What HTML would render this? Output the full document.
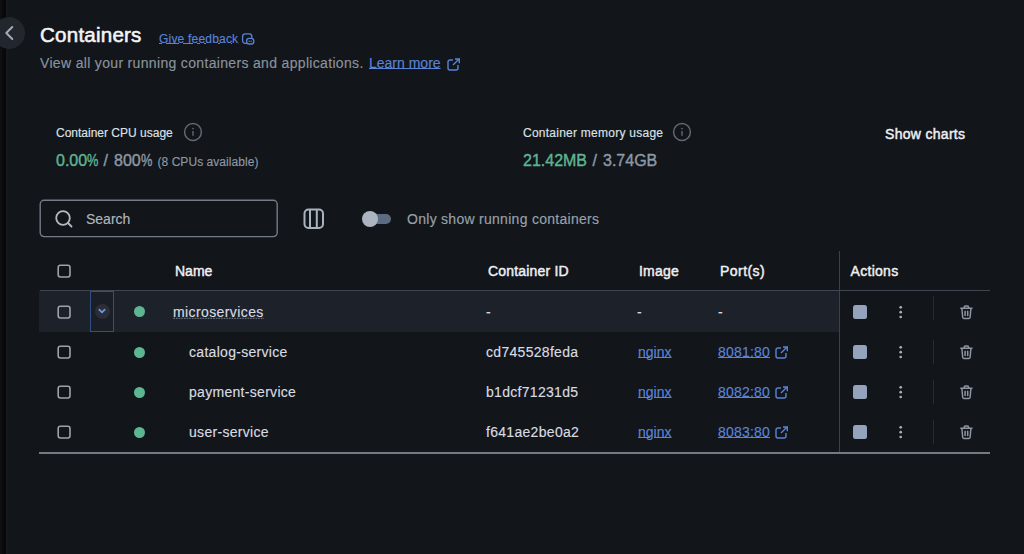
<!DOCTYPE html>
<html><head><meta charset="utf-8">
<style>
html,body{margin:0;padding:0;}
body{width:1024px;height:554px;overflow:hidden;background:#12151a;position:relative;font-family:"Liberation Sans",sans-serif;}
.a{position:absolute;}
.t{position:absolute;white-space:nowrap;-webkit-text-stroke:0.15px currentColor;}
.f12{font-size:12px;line-height:12px;}
.f14{font-size:14px;line-height:14px;}
.f16{font-size:16px;line-height:16px;}
.b{font-weight:400;-webkit-text-stroke:0.45px currentColor;}
.v{-webkit-text-stroke:0.4px currentColor;}
.lnk{color:#5a83d6;text-decoration:underline;text-underline-offset:0px;text-decoration-thickness:1px;}
.cb{position:absolute;width:14px;height:14px;}
.dot{position:absolute;width:11px;height:11px;border-radius:50%;background:#5db592;}
.stop{position:absolute;width:14px;height:14px;border-radius:2.5px;background:#92a3bb;}
.sep{position:absolute;width:1px;height:24px;background:#272b32;}
.cell{color:#d8dce1;}
</style></head>
<body>
<!-- left strip -->
<div class="a" style="left:0;top:0;width:6px;height:554px;background:linear-gradient(90deg,#0e1013 0,#0c0d10 2px,#07080a 3.5px,#07080a 5.5px,#0b0c0f 6px);"></div>
<div class="a" style="left:6px;top:0;width:1.5px;height:554px;background:#16181c;"></div>
<!-- back button -->
<div class="a" style="left:-7px;top:17px;width:32px;height:32px;border-radius:50%;background:#22262d;"></div>
<svg class="a" style="left:0;top:20px" width="24" height="26" viewBox="0 0 24 26"><path d="M12.3 7 L6.3 13 L12.3 19" fill="none" stroke="#a3abb5" stroke-width="2" stroke-linecap="round" stroke-linejoin="round"/></svg>

<!-- header -->
<div class="t b" style="left:40px;top:24.6px;font-size:20.6px;line-height:20.6px;color:#f3f5f7;letter-spacing:0.2px;-webkit-text-stroke:0.55px currentColor;">Containers</div>
<div class="t f12 lnk" style="left:159px;top:32.5px;letter-spacing:0.2px;">Give feedback</div>
<svg class="a" style="left:240px;top:31px" width="16" height="16" viewBox="0 0 16 16"><rect x="2.6" y="2.8" width="9.2" height="9.6" rx="2.6" fill="none" stroke="#5a83d6" stroke-width="1.3"/><rect x="6.6" y="7.4" width="7.2" height="5.6" rx="2.6" fill="#12151a" stroke="#5a83d6" stroke-width="1.3"/><circle cx="9.2" cy="10.2" r="0.7" fill="#5a83d6"/><circle cx="11.2" cy="10.2" r="0.7" fill="#5a83d6"/></svg>
<div class="t f14" style="left:40px;top:56px;color:#8a939d;letter-spacing:0.33px;">View all your running containers and applications.</div>
<div class="t f14 lnk" style="left:369px;top:56px;">Learn more</div>
<svg class="a" style="left:447px;top:58px" width="14" height="13" viewBox="0 0 14 13"><path d="M6 2 H3 A2 2 0 0 0 1 4 V10 A2 2 0 0 0 3 12 H9 A2 2 0 0 0 11 10 V7" fill="none" stroke="#5a83d6" stroke-width="1.4"/><path d="M6 7 L12 1 M8 1 H12.3 V5.3" fill="none" stroke="#5a83d6" stroke-width="1.4"/></svg>

<!-- stats -->
<div class="t f12" style="left:56px;top:126.5px;color:#dde1e6;">Container CPU usage</div>
<svg class="a" style="left:183px;top:122px" width="20" height="20" viewBox="0 0 20 20"><circle cx="10" cy="10" r="8.4" fill="none" stroke="#626871" stroke-width="1.5"/><circle cx="10" cy="6.6" r="0.9" fill="#5d636b"/><path d="M10 9 V13.8" stroke="#5d636b" stroke-width="1.5"/></svg>
<div class="t f16 v" style="left:56px;top:153px;color:#5fb393;">0.00<span style="display:inline-block;transform:scaleX(0.8);transform-origin:0 0;margin-right:-2.8px;">%</span></div>
<div class="t f16 v" style="left:103.5px;top:153px;color:#8d98a5;">/</div>
<div class="t f16 v" style="left:114px;top:153px;color:#8d98a5;">800<span style="display:inline-block;transform:scaleX(0.8);transform-origin:0 0;margin-right:-2.8px;">%</span></div>
<div class="t f12" style="left:157.5px;top:155.7px;color:#8d98a5;letter-spacing:0.05px;">(8 CPUs available)</div>

<div class="t f12" style="left:523px;top:126.5px;color:#dde1e6;letter-spacing:0.25px;">Container memory usage</div>
<svg class="a" style="left:672px;top:122px" width="20" height="20" viewBox="0 0 20 20"><circle cx="10" cy="10" r="8.4" fill="none" stroke="#626871" stroke-width="1.5"/><circle cx="10" cy="6.6" r="0.9" fill="#5d636b"/><path d="M10 9 V13.8" stroke="#5d636b" stroke-width="1.5"/></svg>
<div class="t f16 v" style="left:523px;top:153px;color:#5fb393;">21.42MB</div>
<div class="t f16 v" style="left:592.5px;top:153px;color:#8d98a5;">/</div>
<div class="t f16 v" style="left:603px;top:153px;color:#8d98a5;">3.74GB</div>

<div class="t f14 b" style="left:885px;top:127.3px;color:#eef0f3;letter-spacing:0.3px;">Show charts</div>

<!-- toolbar -->
<svg class="a" style="left:39px;top:199.2px" width="240" height="40" viewBox="0 0 240 40"><rect x="1.2" y="1.2" width="237" height="36.4" rx="4" fill="none" stroke="#737c87" stroke-width="1.4"/></svg>
<svg class="a" style="left:52px;top:207px" width="24" height="24" viewBox="0 0 24 24"><circle cx="11" cy="11" r="6.8" fill="none" stroke="#b3bac2" stroke-width="1.8"/><path d="M16 16 L19.5 19.5" stroke="#b3bac2" stroke-width="1.8" stroke-linecap="round"/></svg>
<div class="t f14" style="left:86px;top:212px;color:#b0b7bf;">Search</div>

<svg class="a" style="left:302px;top:207px" width="24" height="24" viewBox="0 0 24 24"><rect x="2.5" y="2.5" width="18.5" height="18.5" rx="4" fill="none" stroke="#a9b3c0" stroke-width="2"/><path d="M8 3 V21 M14.8 3 V21" stroke="#a9b3c0" stroke-width="2"/></svg>

<div class="a" style="left:363px;top:214px;width:28px;height:10px;border-radius:5px;background:#5b6b80;"></div>
<div class="a" style="left:361.8px;top:210.8px;width:16.5px;height:16.5px;border-radius:50%;background:#acb5bf;"></div>
<div class="t f14" style="left:407px;top:212px;color:#98a1ab;letter-spacing:0.28px;">Only show running containers</div>

<!-- table header -->
<svg class="cb" style="left:57.3px;top:263.6px" width="14" height="14" viewBox="0 0 14 14"><rect x="1.2" y="1.2" width="11.8" height="11.8" rx="2.2" fill="none" stroke="#9ca3ab" stroke-width="1.6"/></svg>
<div class="t f14 b" style="left:175px;top:264px;color:#eef0f3;">Name</div>
<div class="t f14 b" style="left:488px;top:264px;color:#eef0f3;letter-spacing:0.18px;">Container ID</div>
<div class="t f14 b" style="left:639px;top:264px;color:#eef0f3;letter-spacing:0.2px;">Image</div>
<div class="t f14 b" style="left:720px;top:264px;color:#eef0f3;letter-spacing:0.45px;">Port(s)</div>
<div class="t f14 b" style="left:850.5px;top:264px;color:#eef0f3;letter-spacing:0.3px;">Actions</div>

<!-- row 1 bg -->
<div class="a" style="left:39px;top:291px;width:800px;height:40.5px;background:#1c212a;"></div>
<div class="a" style="left:40px;top:290.3px;width:950px;height:1.2px;background:#40464f;"></div>
<div class="a" style="left:839px;top:251px;width:1px;height:202px;background:#3c424a;"></div>
<div class="a" style="left:39px;top:452px;width:951px;height:1.6px;background:#737a83;"></div>

<svg class="cb" style="left:57.3px;top:304.5px" width="14" height="14" viewBox="0 0 14 14"><rect x="1.2" y="1.2" width="11.8" height="11.8" rx="2.2" fill="none" stroke="#9ca3ab" stroke-width="1.6"/></svg>
<div class="a" style="left:89.8px;top:291px;width:22.3px;height:38.8px;border:1px solid #344e86;background:#1a1e26;"></div>
<div class="a" style="left:95.3px;top:304.2px;width:15px;height:15px;border-radius:50%;background:#2b2e36;"></div>
<svg class="a" style="left:96.3px;top:305.2px" width="12" height="12" viewBox="0 0 12 12"><path d="M3.3 4.6 L6 7.3 L8.7 4.6" fill="none" stroke="#6a96e6" stroke-width="1.8" stroke-linecap="round" stroke-linejoin="round"/></svg>
<div class="dot" style="left:133.7px;top:306.0px;"></div>
<div class="t f14 cell" style="left:173px;top:304.55px;letter-spacing:0.4px;">microservices</div>
<svg class="a" style="left:173px;top:317px" width="92" height="3" viewBox="0 0 92 3"><path d="M0.3 1.4 H91" stroke="#656c75" stroke-width="1.3" stroke-dasharray="1.7 0.95"/></svg>
<div class="t f14 cell" style="left:486px;top:304.55px;letter-spacing:0.3px;">-</div>
<div class="t f14 cell" style="left:637px;top:304.55px;">-</div>
<div class="t f14 cell" style="left:718px;top:304.55px;">-</div>
<div class="stop" style="left:853.3px;top:304.5px;"></div>
<svg class="a" style="left:896px;top:303.50px" width="10" height="16" viewBox="0 0 10 16"><circle cx="4.7" cy="3.3" r="1.35" fill="#a9b0b8"/><circle cx="4.7" cy="8.15" r="1.35" fill="#a9b0b8"/><circle cx="4.7" cy="13" r="1.35" fill="#a9b0b8"/></svg>
<div class="sep" style="left:933px;top:296px;"></div>
<svg class="a" style="left:958px;top:303.5px" width="18" height="17" viewBox="0 0 18 17"><path d="M2.8 4.3 H14 M6.2 4.2 V3.2 A1.2 1.2 0 0 1 7.4 2 H9.4 A1.2 1.2 0 0 1 10.6 3.2 V4.2 M3.9 4.5 L4.7 13.3 A1.5 1.5 0 0 0 6.2 14.5 H10.6 A1.5 1.5 0 0 0 12.1 13.3 L12.9 4.5 M7.1 7.2 V11.6 M9.7 7.2 V11.6" fill="none" stroke="#8e96a0" stroke-width="1.5" stroke-linecap="round" stroke-linejoin="round"/></svg>
<svg class="cb" style="left:57.3px;top:345.0px" width="14" height="14" viewBox="0 0 14 14"><rect x="1.2" y="1.2" width="11.8" height="11.8" rx="2.2" fill="none" stroke="#9ca3ab" stroke-width="1.6"/></svg>
<div class="dot" style="left:133.7px;top:346.5px;"></div>
<div class="t f14 cell" style="left:189px;top:345.05px;letter-spacing:0.3px;">catalog-service</div>
<div class="t f14 cell" style="left:486px;top:345.05px;letter-spacing:0.3px;">cd745528feda</div>
<div class="t f14 lnk" style="left:638px;top:345.05px;">nginx</div>
<div class="t f14 lnk" style="left:718px;top:345.05px;letter-spacing:0.2px;">8081:80</div>
<svg class="a" style="left:775px;top:345.5px" width="14" height="13" viewBox="0 0 14 13"><path d="M6 2 H3 A2 2 0 0 0 1 4 V10 A2 2 0 0 0 3 12 H9 A2 2 0 0 0 11 10 V7" fill="none" stroke="#5a83d6" stroke-width="1.4"/><path d="M6 7 L12 1 M8 1 H12.3 V5.3" fill="none" stroke="#5a83d6" stroke-width="1.4"/></svg>
<div class="stop" style="left:853.3px;top:345.0px;"></div>
<svg class="a" style="left:896px;top:344.00px" width="10" height="16" viewBox="0 0 10 16"><circle cx="4.7" cy="3.3" r="1.35" fill="#a9b0b8"/><circle cx="4.7" cy="8.15" r="1.35" fill="#a9b0b8"/><circle cx="4.7" cy="13" r="1.35" fill="#a9b0b8"/></svg>
<div class="sep" style="left:933px;top:340px;"></div>
<svg class="a" style="left:958px;top:344.0px" width="18" height="17" viewBox="0 0 18 17"><path d="M2.8 4.3 H14 M6.2 4.2 V3.2 A1.2 1.2 0 0 1 7.4 2 H9.4 A1.2 1.2 0 0 1 10.6 3.2 V4.2 M3.9 4.5 L4.7 13.3 A1.5 1.5 0 0 0 6.2 14.5 H10.6 A1.5 1.5 0 0 0 12.1 13.3 L12.9 4.5 M7.1 7.2 V11.6 M9.7 7.2 V11.6" fill="none" stroke="#8e96a0" stroke-width="1.5" stroke-linecap="round" stroke-linejoin="round"/></svg>
<svg class="cb" style="left:57.3px;top:385.0px" width="14" height="14" viewBox="0 0 14 14"><rect x="1.2" y="1.2" width="11.8" height="11.8" rx="2.2" fill="none" stroke="#9ca3ab" stroke-width="1.6"/></svg>
<div class="dot" style="left:133.7px;top:386.5px;"></div>
<div class="t f14 cell" style="left:189px;top:385.05px;letter-spacing:0.3px;">payment-service</div>
<div class="t f14 cell" style="left:486px;top:385.05px;letter-spacing:0.3px;">b1dcf71231d5</div>
<div class="t f14 lnk" style="left:638px;top:385.05px;">nginx</div>
<div class="t f14 lnk" style="left:718px;top:385.05px;letter-spacing:0.2px;">8082:80</div>
<svg class="a" style="left:775px;top:385.5px" width="14" height="13" viewBox="0 0 14 13"><path d="M6 2 H3 A2 2 0 0 0 1 4 V10 A2 2 0 0 0 3 12 H9 A2 2 0 0 0 11 10 V7" fill="none" stroke="#5a83d6" stroke-width="1.4"/><path d="M6 7 L12 1 M8 1 H12.3 V5.3" fill="none" stroke="#5a83d6" stroke-width="1.4"/></svg>
<div class="stop" style="left:853.3px;top:385.0px;"></div>
<svg class="a" style="left:896px;top:384.00px" width="10" height="16" viewBox="0 0 10 16"><circle cx="4.7" cy="3.3" r="1.35" fill="#a9b0b8"/><circle cx="4.7" cy="8.15" r="1.35" fill="#a9b0b8"/><circle cx="4.7" cy="13" r="1.35" fill="#a9b0b8"/></svg>
<div class="sep" style="left:933px;top:380px;"></div>
<svg class="a" style="left:958px;top:384.0px" width="18" height="17" viewBox="0 0 18 17"><path d="M2.8 4.3 H14 M6.2 4.2 V3.2 A1.2 1.2 0 0 1 7.4 2 H9.4 A1.2 1.2 0 0 1 10.6 3.2 V4.2 M3.9 4.5 L4.7 13.3 A1.5 1.5 0 0 0 6.2 14.5 H10.6 A1.5 1.5 0 0 0 12.1 13.3 L12.9 4.5 M7.1 7.2 V11.6 M9.7 7.2 V11.6" fill="none" stroke="#8e96a0" stroke-width="1.5" stroke-linecap="round" stroke-linejoin="round"/></svg>
<svg class="cb" style="left:57.3px;top:425.0px" width="14" height="14" viewBox="0 0 14 14"><rect x="1.2" y="1.2" width="11.8" height="11.8" rx="2.2" fill="none" stroke="#9ca3ab" stroke-width="1.6"/></svg>
<div class="dot" style="left:133.7px;top:426.5px;"></div>
<div class="t f14 cell" style="left:189px;top:425.05px;letter-spacing:0.3px;">user-service</div>
<div class="t f14 cell" style="left:486px;top:425.05px;letter-spacing:0.3px;">f641ae2be0a2</div>
<div class="t f14 lnk" style="left:638px;top:425.05px;">nginx</div>
<div class="t f14 lnk" style="left:718px;top:425.05px;letter-spacing:0.2px;">8083:80</div>
<svg class="a" style="left:775px;top:425.5px" width="14" height="13" viewBox="0 0 14 13"><path d="M6 2 H3 A2 2 0 0 0 1 4 V10 A2 2 0 0 0 3 12 H9 A2 2 0 0 0 11 10 V7" fill="none" stroke="#5a83d6" stroke-width="1.4"/><path d="M6 7 L12 1 M8 1 H12.3 V5.3" fill="none" stroke="#5a83d6" stroke-width="1.4"/></svg>
<div class="stop" style="left:853.3px;top:425.0px;"></div>
<svg class="a" style="left:896px;top:424.00px" width="10" height="16" viewBox="0 0 10 16"><circle cx="4.7" cy="3.3" r="1.35" fill="#a9b0b8"/><circle cx="4.7" cy="8.15" r="1.35" fill="#a9b0b8"/><circle cx="4.7" cy="13" r="1.35" fill="#a9b0b8"/></svg>
<div class="sep" style="left:933px;top:420px;"></div>
<svg class="a" style="left:958px;top:424.0px" width="18" height="17" viewBox="0 0 18 17"><path d="M2.8 4.3 H14 M6.2 4.2 V3.2 A1.2 1.2 0 0 1 7.4 2 H9.4 A1.2 1.2 0 0 1 10.6 3.2 V4.2 M3.9 4.5 L4.7 13.3 A1.5 1.5 0 0 0 6.2 14.5 H10.6 A1.5 1.5 0 0 0 12.1 13.3 L12.9 4.5 M7.1 7.2 V11.6 M9.7 7.2 V11.6" fill="none" stroke="#8e96a0" stroke-width="1.5" stroke-linecap="round" stroke-linejoin="round"/></svg>
</body></html>
